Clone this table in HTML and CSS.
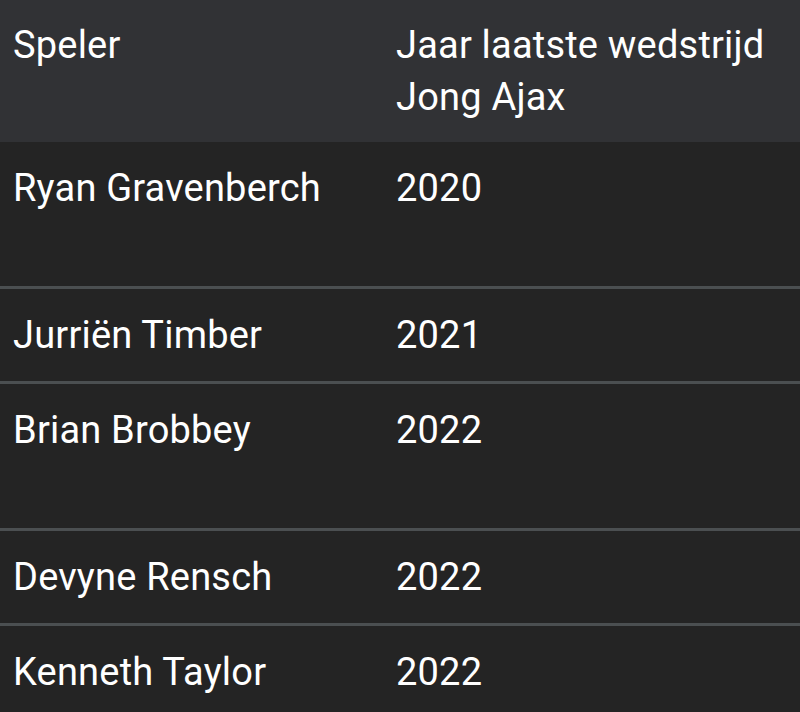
FILE: index.html
```html
<!DOCTYPE html>
<html lang="nl">
<head>
<meta charset="utf-8">
<link rel="stylesheet" href="styles.css">
</head>
<body>
<table class="tbl">
  <thead>
    <tr>
      <th class="c1">Speler</th>
      <th class="c2">Jaar laatste wedstrijd Jong Ajax</th>
    </tr>
  </thead>
  <tbody>
    <tr class="tall"><td>Ryan Gravenberch</td><td>2020</td></tr>
    <tr><td>Jurriën Timber</td><td>2021</td></tr>
    <tr class="tall"><td>Brian Brobbey</td><td>2022</td></tr>
    <tr><td>Devyne Rensch</td><td>2022</td></tr>
    <tr><td>Kenneth Taylor</td><td>2022</td></tr>
  </tbody>
</table>
</body>
</html>
```
FILE: styles.css
```css
html, body {
  margin: 0;
  padding: 0;
  background: #242424;
}
body {
  font-family: Roboto, "Noto Sans", sans-serif;
  color: #ffffff;
  width: 800px;
  height: 712px;
  overflow: hidden;
}
.tbl {
  width: 800px;
  border-collapse: collapse;
  font-size: 38px;
  line-height: 52px;
  letter-spacing: 0.2px;
}
.tbl th {
  background: #313235;
  font-weight: 400;
  text-align: left;
  vertical-align: top;
  padding: 19px 13px 19px 13px;
}
.tbl .c1 { width: 357px; }
.tbl .c2 { padding-right: 20px; }
.tbl td {
  vertical-align: top;
  padding: 20px 13px;
  height: 52px;
}
.tbl tbody tr + tr td {
  border-top: 3px solid #4b4f51;
}
.tbl tr.tall td {
  height: 104px;
}
```
